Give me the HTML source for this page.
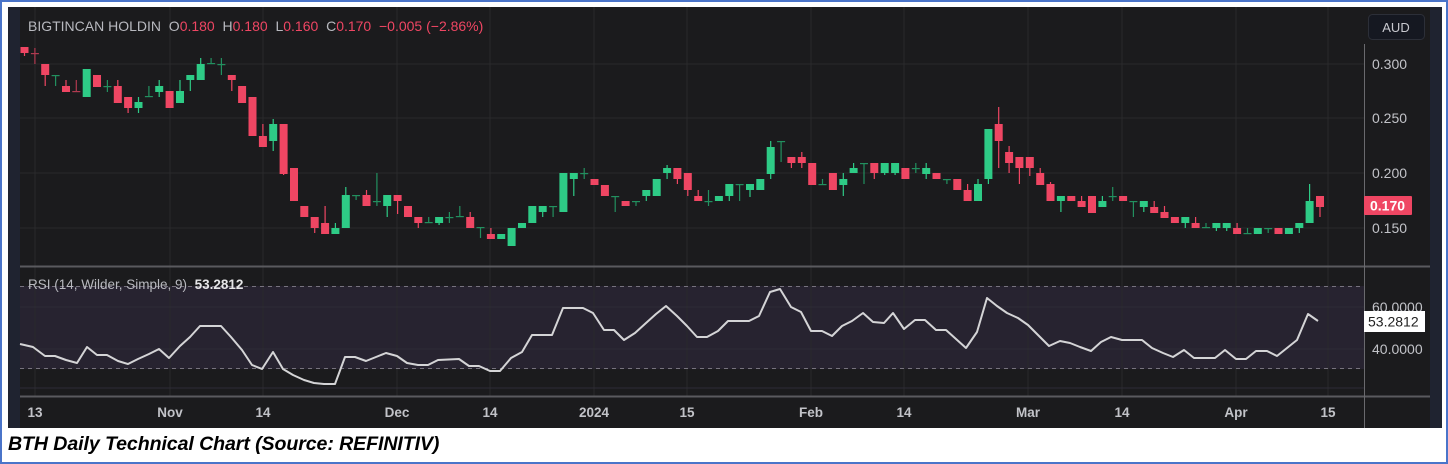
<!DOCTYPE html>
<html><head><meta charset="utf-8"><style>
html,body{margin:0;padding:0;background:#fff;width:1448px;height:464px;overflow:hidden}
#wrap{position:absolute;left:0;top:0;width:1444px;height:460px;border:2px solid #4a74c9}
svg{position:absolute;left:0;top:0}
.cap{position:absolute;left:8px;top:433px;font:italic bold 19.6px "Liberation Sans",sans-serif;color:#000;letter-spacing:-0.1px}
</style></head><body>
<div id="wrap"></div>
<svg id="s" width="1448" height="464" xmlns="http://www.w3.org/2000/svg" font-family="Liberation Sans, sans-serif"></svg>
<div class="cap">BTH Daily Technical Chart (Source: REFINITIV)</div>
<script>
const C=[[47,53,47,56,'r'],[53,54,48,64,'r'],[64,75,64,86,'r'],[75,76,75,86,'g'],[86,92,80,92,'r'],[91,92,80,92,'r'],[69,97,69,97,'g'],[75,87,75,87,'r'],[86,87,80,92,'g'],[86,103,80,103,'r'],[97,108,97,113,'r'],[102,108,97,113,'g'],[96,97,86,97,'g'],[86,92,80,97,'g'],[91,108,91,108,'r'],[91,103,80,103,'g'],[75,80,75,91,'g'],[64,80,58,80,'g'],[63,64,58,64,'g'],[64,65,58,75,'g'],[75,80,75,91,'r'],[86,103,86,103,'r'],[97,136,97,136,'r'],[136,147,124,147,'r'],[124,141,119,151,'g'],[124,174,124,175,'r'],[168,201,168,201,'r'],[206,217,206,217,'r'],[217,228,217,233,'r'],[223,234,206,234,'r'],[228,234,223,234,'g'],[195,228,187,228,'g'],[195,196,195,200,'g'],[195,206,190,206,'r'],[201,202,173,206,'g'],[195,206,195,217,'g'],[195,201,195,214,'r'],[206,217,206,217,'r'],[217,223,217,228,'r'],[222,223,217,223,'g'],[217,223,217,225,'g'],[217,218,212,223,'g'],[216,217,206,217,'g'],[217,228,212,228,'r'],[227,228,227,238,'g'],[234,239,228,239,'r'],[234,239,234,239,'g'],[228,246,228,246,'g'],[223,228,223,228,'g'],[206,223,206,223,'g'],[206,212,206,217,'g'],[206,207,206,217,'g'],[173,212,173,212,'g'],[173,179,173,196,'g'],[173,174,168,179,'g'],[179,185,179,185,'r'],[185,196,185,196,'r'],[196,197,196,212,'g'],[201,206,201,206,'r'],[201,202,201,206,'g'],[190,196,190,201,'g'],[179,196,179,196,'g'],[168,173,165,179,'g'],[168,179,168,184,'r'],[173,190,173,196,'r'],[196,201,190,201,'r'],[201,202,190,206,'g'],[196,201,196,201,'g'],[184,196,184,201,'g'],[184,185,184,201,'g'],[184,190,184,197,'g'],[179,190,179,190,'g'],[147,174,141,179,'g'],[141,142,141,162,'g'],[157,163,157,168,'r'],[157,163,152,168,'r'],[163,185,163,185,'r'],[184,185,179,185,'g'],[173,190,173,190,'r'],[179,185,173,196,'g'],[168,173,163,173,'g'],[163,164,163,184,'g'],[163,173,163,179,'r'],[163,173,163,175,'g'],[163,173,163,175,'g'],[168,179,168,179,'r'],[168,169,163,173,'g'],[168,174,163,179,'g'],[173,179,173,179,'r'],[179,180,179,184,'g'],[179,190,179,190,'r'],[190,201,184,201,'r'],[184,201,179,201,'g'],[129,179,129,184,'g'],[124,141,107,168,'r'],[152,163,146,173,'r'],[157,168,157,184,'r'],[157,168,157,176,'r'],[173,185,168,185,'r'],[184,201,182,201,'r'],[196,201,196,212,'g'],[196,201,196,201,'r'],[201,207,196,207,'r'],[196,213,196,213,'r'],[201,207,196,207,'g'],[196,197,187,201,'g'],[196,201,196,201,'r'],[201,202,201,217,'g'],[201,207,201,212,'g'],[207,213,201,213,'r'],[212,218,206,218,'r'],[217,223,217,223,'r'],[217,223,217,228,'g'],[223,228,217,228,'r'],[227,228,223,228,'g'],[223,228,223,231,'g'],[223,228,223,231,'g'],[228,234,223,234,'r'],[233,234,228,234,'g'],[228,234,228,234,'g'],[228,229,228,233,'g'],[228,234,228,234,'r'],[228,234,228,234,'g'],[223,228,223,233,'g'],[201,223,184,223,'g'],[196,207,196,217,'r']];
const R=[[20,344],[33,347],[45,356],[55,356],[66,360],[77,363],[87,347],[97,355],[107,355],[118,361],[128,364],[138,359],[149,354],[159,349],[169,358],[180,346],[190,337],[200,326],[211,326],[221,326],[231,337],[242,350],[252,365],[262,369],[273,352],[283,369],[293,375],[304,380],[314,383],[324,384],[335,384],[345,357],[355,357],[366,361],[376,357],[386,353],[397,356],[407,363],[418,365],[428,365],[438,360],[459,359],[469,366],[479,366],[490,371],[500,371],[511,358],[522,352],[532,335],[552,335],[563,308],[583,308],[593,313],[604,330],[614,330],[624,340],[635,333],[646,323],[656,314],[666,306],[677,316],[687,326],[697,337],[707,337],[718,331],[728,321],[749,321],[759,316],[770,292],[780,289],[791,307],[801,312],[811,331],[822,331],[832,336],[842,326],[852,321],[863,313],[873,322],[884,323],[893,313],[904,329],[915,320],[925,320],[936,330],[946,330],[956,339],[966,348],[977,332],[987,298],[997,306],[1007,313],[1018,318],[1028,325],[1039,336],[1049,346],[1060,341],[1070,343],[1080,347],[1091,351],[1101,342],[1111,337],[1122,340],[1142,340],[1152,348],[1163,353],[1173,357],[1184,350],[1194,358],[1215,358],[1225,350],[1236,359],[1246,359],[1256,351],[1267,351],[1277,356],[1287,348],[1297,340],[1308,314],[1318,321]];
let h='';
h+='<rect x="8" y="7" width="1434" height="421" fill="#1b1b1d"/>';
h+='<rect x="8" y="7" width="12" height="421" fill="#1f2330"/>';
h+='<rect x="1430" y="7" width="12" height="421" fill="#1f2330"/>';
h+='<rect x="20" y="286" width="1344" height="83" fill="#272330"/>';
const VX=[35,170,263,397,490,594,687,811,904,1028,1122,1236,1328];
VX.forEach(x=>h+=`<line x1="${x}" y1="7" x2="${x}" y2="396" stroke="#2a2a2c" stroke-width="1"/>`);
[64,118,173,228].forEach(y=>h+=`<line x1="20" y1="${y}" x2="1364" y2="${y}" stroke="#2a2a2c"/>`);
[307,349,388].forEach(y=>h+=`<line x1="20" y1="${y}" x2="1364" y2="${y}" stroke="#2e2b36"/>`);
[286.5,368.5].forEach(y=>h+=`<line x1="20" y1="${y}" x2="1364" y2="${y}" stroke="#77737e" stroke-dasharray="4,4"/>`);
h+='<line x1="20" y1="266.5" x2="1430" y2="266.5" stroke="#5a5a5e" stroke-width="2"/>';
h+='<line x1="20" y1="396.5" x2="1430" y2="396.5" stroke="#5a5a5e" stroke-width="2"/>';
h+='<line x1="1364.5" y1="44" x2="1364.5" y2="428" stroke="#6a6a6e" stroke-width="1"/>';
C.forEach((c,i)=>{const x=24.5+i*10.364;const col=c[4]=='r'?'#ef4663':'#2ecb86';const wc=c[4]=='r'?'#b03a50':'#22905f';
 h+=`<line x1="${x.toFixed(1)}" y1="${c[2]}" x2="${x.toFixed(1)}" y2="${c[3]}" stroke="${(c[1]-c[0]<=1)?wc:col}" stroke-width="1.2"/>`;
 let bh=Math.max(1.2,c[1]-c[0]);if(c[1]-c[0]<=1){h+=`<rect x="${(x-4).toFixed(1)}" y="${c[0]}" width="8" height="1.2" fill="${wc}"/>`;}
 else h+=`<rect x="${(x-4).toFixed(1)}" y="${c[0]}" width="8" height="${bh}" fill="${col}"/>`;});
h+=`<polyline points="${R.map(p=>p.join(',')).join(' ')}" fill="none" stroke="#d4d4d6" stroke-width="2" stroke-linejoin="round"/>`;
h+='<text x="28" y="31" font-size="14" fill="#b8b9bf">BIGTINCAN HOLDIN&#160;&#160;O<tspan fill="#ef4663">0.180</tspan>&#160;&#160;H<tspan fill="#ef4663">0.180</tspan>&#160;&#160;L<tspan fill="#ef4663">0.160</tspan>&#160;&#160;C<tspan fill="#ef4663">0.170&#160;&#160;−0.005 (−2.86%)</tspan></text>';
h+='<text x="28" y="289" font-size="13.5" fill="#b8b9bf">RSI (14, Wilder, Simple, 9)&#160;&#160;<tspan fill="#e6e6e8" font-weight="bold">53.2812</tspan></text>';
h+='<rect x="1368.5" y="14.5" width="56" height="25" rx="4" fill="#151821" stroke="#2c2f38"/>';
h+='<text x="1396" y="32" font-size="13" fill="#c8c9cf" text-anchor="middle">AUD</text>';
[['0.300',64],['0.250',118],['0.200',173],['0.150',228]].forEach(a=>h+=`<text x="1372" y="${a[1]+5}" font-size="14" fill="#c2c3c8">${a[0]}</text>`);
h+='<rect x="1364" y="196" width="48" height="19" rx="1" fill="#ef4663"/>';
h+='<text x="1370" y="210.5" font-size="14" font-weight="bold" fill="#fff">0.170</text>';
h+='<text x="1372" y="312" font-size="14" fill="#c2c3c8">60.0000</text>';
h+='<text x="1372" y="354" font-size="14" fill="#c2c3c8">40.0000</text>';
h+='<rect x="1364" y="311" width="61" height="21" fill="#fff"/>';
h+='<text x="1368" y="326.5" font-size="14" fill="#222">53.2812</text>';
const L=['13','Nov','14','Dec','14','2024','15','Feb','14','Mar','14','Apr','15'];
L.forEach((t,i)=>h+=`<text x="${VX[i]}" y="417" font-size="13.5" font-weight="bold" fill="#c2c3c8" text-anchor="middle">${t}</text>`);
document.getElementById('s').innerHTML=h;
</script>
</body></html>
